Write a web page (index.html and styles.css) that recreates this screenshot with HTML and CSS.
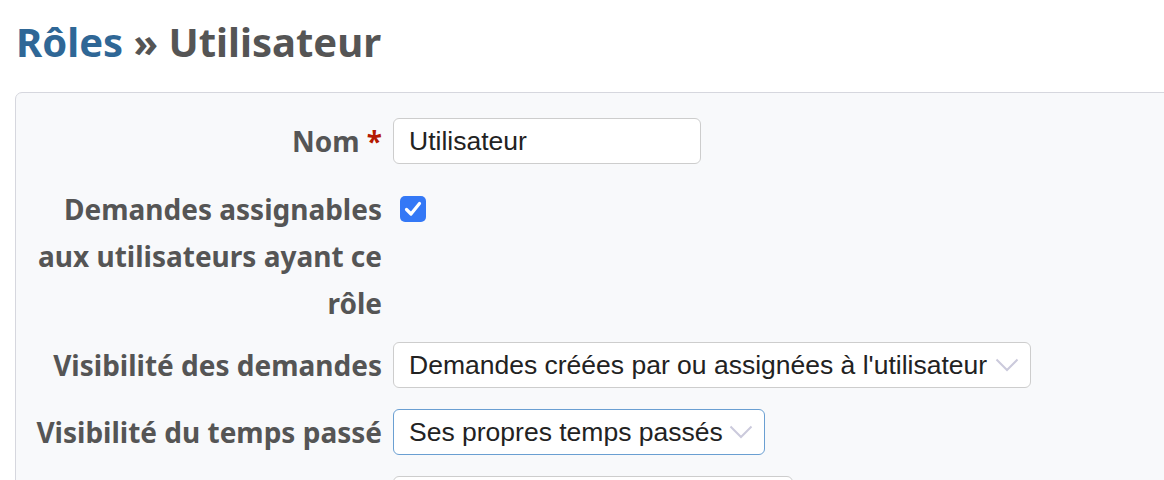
FILE: index.html
```html
<!DOCTYPE html>
<html lang="fr">
<head>
    <meta charset="UTF-8">
    <title>Rôles » Utilisateur</title>
    <link rel="stylesheet" href="styles.css">
</head>
<body>
    <h2 class="title"><a href="#">Rôles</a> » Utilisateur</h2>

    <div class="box">
        <div class="row">
            <label for="role_name">Nom <span class="required">*</span></label>
            <input type="text" id="role_name" class="name-input" value="Utilisateur">
        </div>

        <div class="row check-row">
            <label for="role_assignable">Demandes assignables<br>aux utilisateurs ayant ce<br>rôle</label>
            <span class="check" id="role_assignable">
                <svg width="26" height="26" viewBox="0 0 26 26">
                    <path d="M6.5 13.5 L11 18 L19.5 7.5" fill="none" stroke="#fff" stroke-width="3.2" stroke-linecap="round" stroke-linejoin="round"/>
                </svg>
            </span>
        </div>

        <div class="row">
            <label for="issues_visibility">Visibilité des demandes</label>
            <div class="select-wrap select-wide">
                <select id="issues_visibility">
                    <option>Demandes créées par ou assignées à l'utilisateur</option>
                </select>
                <svg class="chevron" width="24" height="14" viewBox="0 0 24 14">
                    <path d="M1.5 1.5 L12 12 L22.5 1.5" fill="none" stroke="#cbcadc" stroke-width="2"/>
                </svg>
            </div>
        </div>

        <div class="row">
            <label for="time_entries_visibility">Visibilité du temps passé</label>
            <div class="select-wrap select-mid focused">
                <select id="time_entries_visibility">
                    <option>Ses propres temps passés</option>
                </select>
                <svg class="chevron" width="24" height="14" viewBox="0 0 24 14">
                    <path d="M1.5 1.5 L12 12 L22.5 1.5" fill="none" stroke="#cbcadc" stroke-width="2"/>
                </svg>
            </div>
        </div>

        <div class="row">
            <label for="users_visibility"></label>
            <div class="select-wrap select-users">
                <select id="users_visibility"></select>
            </div>
        </div>
    </div>
</body>
</html>
```

FILE: styles.css
```css
body {
    margin: 0;
    padding: 0 16px;
    background-color: #fff;
    color: #555;
    font-family: 'Noto Sans', 'DejaVu Sans', sans-serif;
    overflow: hidden;
}
.title {
    margin: 18px 0 26px;
    font-size: 40px;
    line-height: 48px;
    font-weight: bold;
    color: #555;
}
.title a {
    color: #2f6796;
    text-decoration: none;
}
.box {
    display: flex;
    flex-direction: column;
    gap: 21px;
    margin-left: -1px;
    margin-right: -40px;
    padding: 25px 0 40px;
    background-color: #f8f9fb;
    border: 1px solid #d6d7de;
    border-radius: 7px;
}
.row {
    display: flex;
    align-items: center;
    gap: 11px;
}
.row label {
    width: 366px;
    flex-shrink: 0;
    text-align: right;
    font-size: 28px;
    font-weight: bold;
    line-height: 36px;
    color: #555;
}
.required {
    color: #b51a00;
}
.name-input,
.select-wrap select {
    box-sizing: border-box;
    height: 46px;
    padding: 0 15px;
    border: 1px solid #cdcdcd;
    border-radius: 6px;
    background-color: #fff;
    color: #222;
    font-family: 'Liberation Sans', Arial, sans-serif;
    font-size: 26.5px;
}
.name-input {
    width: 308px;
}
.check-row {
    align-items: flex-start;
}
.check-row label {
    line-height: 47px;
    margin: 1px 0 -6px;
}
.check {
    display: flex;
    width: 26px;
    height: 26px;
    margin: 11px 0 0 7px;
    border-radius: 5px;
    background-color: #3478f6;
}
.select-wrap {
    position: relative;
    display: flex;
}
.select-wrap select {
    appearance: none;
    -webkit-appearance: none;
    width: 100%;
    padding-right: 40px;
    outline: none;
}
.select-wide {
    width: 638px;
}
.select-mid {
    width: 372px;
}
.select-users {
    width: 400px;
}
.focused select {
    border-color: #6a9fd2;
}
.chevron {
    position: absolute;
    right: 12px;
    top: 16px;
    pointer-events: none;
}
```
